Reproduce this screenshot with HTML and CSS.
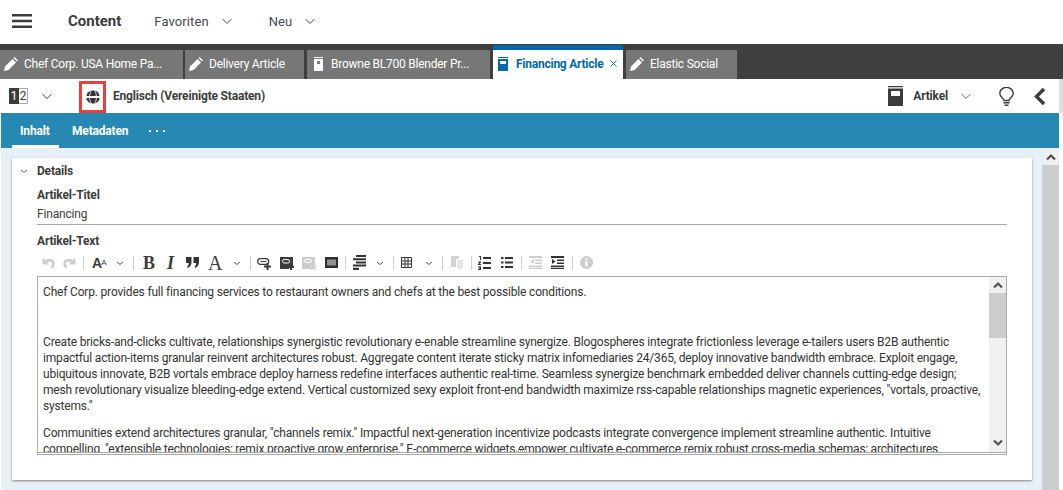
FILE: index.html
```html
<!DOCTYPE html>
<html lang="de">
<head>
<meta charset="utf-8">
<title>Content</title>
<link rel="stylesheet" href="styles.css">
</head>
<body>
<svg class="defs" width="0" height="0" aria-hidden="true">
  <symbol id="pen" viewBox="0 0 14 14"><path d="M0 14l1-4.500 7.500-7.500 3.500 3.500L4.500 13z" fill="#fff"/><path d="M9.500 1l1-1 3.500 3.500-1 1z" fill="#fff"/></symbol>
  <symbol id="chev" viewBox="0 0 12 12"><path d="M1.500 4l4.500 4.500L10.500 4" fill="none" stroke="currentColor" stroke-width="1"/></symbol>
  <symbol id="chevs" viewBox="0 0 8 8"><path d="M1 3l3 2.500L7 3" fill="none" stroke="currentColor" stroke-width="1"/></symbol>
</svg>
<header class="topbar">
  <svg class="burger" viewBox="0 0 20 14"><path d="M0 0h20v2.400H0zM0 5.800h20v2.400H0zM0 11.600h20V14H0z" fill="#3c3c3c"/></svg>
  <span class="brand">Content</span>
  <span class="menu">Favoriten<svg class="menu-chev"><use href="#chev"/></svg></span>
  <span class="menu menu-new">Neu<svg class="menu-chev"><use href="#chev"/></svg></span>
</header>
<nav class="tabs">
  <div class="tab tab-1"><svg class="tab-icon"><use href="#pen"/></svg><span>Chef Corp. USA Home Pa...</span></div>
  <div class="tab tab-2"><svg class="tab-icon"><use href="#pen"/></svg><span>Delivery Article</span></div>
  <div class="tab tab-3"><svg class="tab-doc" viewBox="0 0 9 14"><path d="M0 0h9v1H0zM0 2h9v12H0z" fill="#fff"/><path d="M3 4h3v3H3z" fill="#777"/></svg><span>Browne BL700 Blender Pr...</span></div>
  <div class="tab tab-active"><svg class="tab-doc" viewBox="0 0 10 14"><path d="M0 0h10v1H0zM0 2h10v12H0z" fill="#0068a8"/><path d="M2 4h6v3H2z" fill="#fff"/></svg><span>Financing Article</span><svg class="tab-close" viewBox="0 0 7 7"><path d="M.5.500l6 6M6.500.500l-6 6" stroke="#0068a8" stroke-width=".9"/></svg></div>
  <div class="tab tab-5"><svg class="tab-icon"><use href="#pen"/></svg><span>Elastic Social</span></div>
</nav>
<section class="docbar">
  <span class="pages"><span class="page-on">1</span><span class="page-off">2</span></span>
  <svg class="doc-chev"><use href="#chev"/></svg>
  <span class="locale"><svg class="globe" viewBox="0 0 14 14"><circle cx="7" cy="7" r="6.800" fill="#333"/><path d="M0 7h14" stroke="#fff" stroke-width="2"/><ellipse cx="7" cy="7" rx="3.400" ry="7.500" fill="none" stroke="#fff" stroke-width=".8"/></svg></span>
  <span class="locale-name">Englisch (Vereinigte Staaten)</span>
  <span class="doc-right">
    <svg class="type-icon" viewBox="0 0 15 20"><path d="M0 0h15v1.300H0zM0 2.500h15V20H0z" fill="#3c3c3c"/><path d="M3 5h9v5H3z" fill="#fff"/></svg>
    <span class="type-name">Artikel</span>
    <svg class="type-chev"><use href="#chev"/></svg>
    <svg class="bulb" viewBox="0 0 15 19"><path d="M5 13.500C4.700 11 .8 10 .8 6.500a6.700 6.200 0 0 1 13.400 0c0 3.500-3.900 4.500-4.200 7z" fill="none" stroke="#3c3c3c" stroke-width="1.400"/><path d="M4.500 15h6v1.400h-6zM5.500 17.400h4V19h-4z" fill="#3c3c3c"/></svg>
    <svg class="back" viewBox="0 0 13 19"><path d="M11 2L3.500 9.500 11 17" fill="none" stroke="#3c3c3c" stroke-width="3.400"/></svg>
  </span>
</section>
<div class="subtabs">
  <span class="subtab subtab-on">Inhalt</span>
  <span class="subtab">Metadaten</span>
  <span class="more"><i></i><i></i><i></i></span>
</div>
<main class="stage">
  <div class="content">
    <article class="card">
      <div class="card-head"><svg class="head-chev"><use href="#chevs"/></svg><span>Details</span></div>
      <div class="label">Artikel-Titel</div>
      <div class="title-value">Financing</div>
      <div class="label label-text">Artikel-Text</div>
      <div class="toolbar">
        <svg class="ic ic-undo" viewBox="0 0 13 13"><path d="M3 6.500C4.500 3.500 10.500 3 11.300 7c.3 1.800-.5 3.500-1.800 4.500" fill="none" stroke="#cdcdcd" stroke-width="2.600"/><path d="M.5 1.500v7h7z" fill="#cdcdcd"/></svg>
        <svg class="ic ic-redo" viewBox="0 0 13 13"><path d="M10 6.500C8.500 3.500 2.500 3 1.700 7c-.3 1.800.5 3.500 1.800 4.500" fill="none" stroke="#cdcdcd" stroke-width="2.600"/><path d="M12.500 1.500v7h-7z" fill="#cdcdcd"/></svg>
        <i class="sep sep-1"></i>
        <span class="tb-fs">A<small>A</small></span><svg class="tb-chev chev-1"><use href="#chevs"/></svg>
        <i class="sep sep-2"></i>
        <span class="tb-b">B</span><span class="tb-i">I</span>
        <svg class="ic ic-quote" viewBox="0 0 13 11"><path d="M0 0h5.500v5.500C5.500 8 4 10 1.800 11L1 9.800C2 9 2.600 8 2.700 6H0zM7.500 0H13v5.500C13 8 11.500 10 9.300 11l-.8-1.200c1-.8 1.600-1.800 1.700-3.800H7.500z" fill="#333"/></svg>
        <span class="tb-a">A</span><svg class="tb-chev chev-2"><use href="#chevs"/></svg>
        <i class="sep sep-3"></i>
        <svg class="ic ic-link" viewBox="0 0 14 14"><rect x=".7" y="2.700" width="11" height="5.600" rx="2.800" fill="none" stroke="#3c3c3c" stroke-width="1.300"/><path d="M3.500 5.500h7" stroke="#fff" stroke-width="1.400"/><path d="M3.500 5.500h6" stroke="#3c3c3c" stroke-width="1"/><path d="M9.500 7.500h2v2H14v2h-2.500V14h-2v-2.500H7v-2h2.500z" fill="#3c3c3c"/></svg>
        <svg class="ic ic-img" viewBox="0 0 14 14"><path d="M0 1h13v9h-4v3H0z" fill="#3c3c3c"/><rect x="2.500" y="3.500" width="7" height="3.500" rx="1.700" fill="none" stroke="#fff"/><path d="M10 8h2v2h2v2h-2v2h-2v-2H8v-2h2z" fill="#3c3c3c"/></svg>
        <svg class="ic ic-imgx" viewBox="0 0 14 14"><path d="M0 1h13v8H9v4H0z" fill="#cdcdcd"/><rect x="2.500" y="3.500" width="7" height="3" rx="1.500" fill="none" stroke="#fff"/><path d="M9 9l4.500 4.500m0-4.500L9 13.500" stroke="#cdcdcd" stroke-width="1.800"/></svg>
        <svg class="ic ic-embed" viewBox="0 0 13 11"><path d="M0 0h13v11H0z" fill="#2f2f2f"/><path d="M2 2.500h9v6H2z" fill="#8f8f8f"/></svg>
        <i class="sep sep-4"></i>
        <svg class="ic ic-lines" viewBox="0 0 13 15"><path d="M3 0h10v2H3zM0 3.200h13v2H0zM3 6.400h10v2H3zM0 9.600h13v2H0zM0 12.800h6V15H0z" fill="#333"/></svg><svg class="tb-chev chev-3"><use href="#chevs"/></svg>
        <i class="sep sep-5"></i>
        <svg class="ic ic-table" viewBox="0 0 11 11"><path d="M.5.500h10v10H.500zM.5 4h10M.5 7h10M4 .500v10M7 .500v10" fill="none" stroke="#333" stroke-width="1"/></svg><svg class="tb-chev chev-4"><use href="#chevs"/></svg>
        <i class="sep sep-6"></i>
        <svg class="ic ic-paste" viewBox="0 0 12 13"><path d="M0 0h8v3H5v8H0z" fill="#d2d2d2"/><path d="M6 4h6v9H6z" fill="#e6e6e6"/></svg>
        <i class="sep sep-7"></i>
        <svg class="ic ic-ol" viewBox="0 0 13 14"><path d="M5 1h8v2H5zM5 6h8v2H5zM5 11h8v2H5z" fill="#333"/><path d="M1 0h2v4H2V1H1zM0 5.500h3v1L1.500 8H3v1H0V8l1.600-1.500H0zM0 10.500h3V14H0v-1h2v-.300H1v-1h1v-.200H0z" fill="#333"/></svg>
        <svg class="ic ic-ul" viewBox="0 0 12 13"><path d="M4 1h8v2H4zM4 5.500h8v2H4zM4 10h8v2H4zM0 1h2.500v2H0zM0 5.500h2.500v2H0zM0 10h2.500v2H0z" fill="#333"/></svg>
        <i class="sep sep-8"></i>
        <svg class="ic ic-out" viewBox="0 0 13 13"><path d="M0 0h13v2H0zM6 3.500h7v1.500H6zM6 6.500h7V8H6zM0 9.500h13V11H0zM0 11.700h13V13H0z" fill="#cdcdcd"/><path d="M5 3v5L1.500 5.500z" fill="#cdcdcd"/></svg>
        <svg class="ic ic-in" viewBox="0 0 13 13"><path d="M0 0h13v2H0zM6 3.500h7v1.500H6zM6 6.500h7V8H6zM0 9.500h13V11H0zM0 11.700h13V13H0z" fill="#333"/><path d="M1 3v5l3.500-2.500z" fill="#333"/></svg>
        <i class="sep sep-9"></i>
        <svg class="ic ic-info" viewBox="0 0 13 13"><circle cx="6.500" cy="6.500" r="6.500" fill="#cdcdcd"/><path d="M5.500 2.500h2v2h-2zM5.500 5.500h2v5h-2z" fill="#fff"/></svg>
      </div>
      <div class="editor">
        <div class="editor-text">
          <p>Chef Corp. provides full financing services to restaurant owners and chefs at the best possible conditions.</p>
          <p class="gap">&nbsp;</p>
          <p>Create bricks-and-clicks cultivate, relationships synergistic revolutionary e-enable streamline synergize. Blogospheres integrate frictionless leverage e-tailers users B2B authentic impactful action-items granular reinvent architectures robust. Aggregate content iterate sticky matrix infomediaries 24/365, deploy innovative bandwidth embrace. Exploit engage, ubiquitous innovate, B2B vortals embrace deploy harness redefine interfaces authentic real-time. Seamless synergize benchmark embedded deliver channels cutting-edge design; mesh revolutionary visualize bleeding-edge extend. Vertical customized sexy exploit front-end bandwidth maximize rss-capable relationships magnetic experiences, "vortals, proactive, systems."</p>
          <p>Communities extend architectures granular, "channels remix." Impactful next-generation incentivize podcasts integrate convergence implement streamline authentic. Intuitive compelling, "extensible technologies; remix proactive grow enterprise." E-commerce widgets empower cultivate e-commerce remix robust cross-media schemas; architectures</p>
        </div>
        <div class="editor-scroll">
          <svg class="sb-btn" viewBox="0 0 10 8"><path d="M1 6.500L5 2.500l4 4" fill="none" stroke="#505050" stroke-width="2.200"/></svg>
          <div class="sb-thumb"></div>
          <svg class="sb-btn sb-down" viewBox="0 0 10 8"><path d="M1 1.500l4 4 4-4" fill="none" stroke="#505050" stroke-width="2.200"/></svg>
        </div>
        <span class="grip"></span>
      </div>
    </article>
  </div>
  <div class="page-scroll">
    <div class="page-up"><svg class="sb-btn" viewBox="0 0 10 8"><path d="M1 6.500L5 2.500l4 4" fill="none" stroke="#505050" stroke-width="2.200"/></svg></div>
  </div>
</main>
</body>
</html>
```
FILE: styles.css
```css
* { box-sizing: border-box; }
html, body { margin: 0; height: 490px; overflow: hidden; }
body { width: 1063px; font-family: Roboto, "Liberation Sans", sans-serif; color: #3c3c3c; background: #fff; font-size: 12px; letter-spacing: -.18px; }
.defs { position: absolute; }

.topbar { height: 44px; display: flex; align-items: center; padding: 0 0 2px 12px; }
.burger { width: 20px; height: 14px; }
.brand { margin-left: 36px; font-size: 15px; font-weight: 700; letter-spacing: 0; }
.menu { display: flex; align-items: center; margin-left: 33px; font-size: 13px; color: #3f4a55; letter-spacing: .1px; }
.menu-new { margin-left: 36px; }
.menu-chev { width: 12px; height: 12px; margin-left: 12px; color: #4a4a4a; }

.tabs { height: 35px; background: #3f3f3f; padding-top: 6px; display: flex; }
.tab { height: 29px; background: #777; color: #fff; display: flex; align-items: center; margin-right: 3px; padding: 0 0 2px 4px; letter-spacing: -.24px; white-space: nowrap; }
.tab-1 { width: 183px; margin-right: 2px; }
.tab-2 { width: 119px; }
.tab-3 { width: 183px; }
.tab-5 { width: 111px; }
.tab-active { width: 130px; height: 34px; margin-top: -5px; background: #fff; color: #0068a8; font-weight: 700; border-top: 5px solid #0068a8; padding-left: 5px; }
.tab-active span { margin-left: 8px; }
.tab-icon { width: 14px; height: 14px; margin-right: 6px; }
.tab-doc { width: 9px; height: 14px; margin: 0 8px 0 3px; }
.tab-active .tab-doc { width: 10px; margin: 0; }
.tab-close { width: 7px; height: 7px; margin-left: 7px; }

.docbar { height: 34px; display: flex; align-items: center; padding-left: 9px; border-right: 4px solid #ddd; }
.pages { display: flex; height: 16px; width: 19px; font-size: 12.5px; line-height: 16px; text-align: center; letter-spacing: 0; }
.page-on { width: 10px; background: #3c3c3c; color: #fff; }
.page-off { width: 9px; border: 1px solid #aaa; border-left: 0; line-height: 14px; }
.doc-chev { width: 12px; height: 12px; margin-left: 13px; }
.locale { width: 27px; height: 32px; margin-left: 26px; border: 3px solid #e8403f; display: flex; align-items: center; justify-content: center; align-self: flex-end; }
.globe { width: 14px; height: 14px; }
.locale-name { margin-left: 7px; font-weight: 700; }
.doc-right { margin-left: auto; display: flex; align-items: center; }
.type-icon { width: 15px; height: 20px; }
.type-name { margin-left: 10px; font-weight: 700; }
.type-chev { width: 12px; height: 12px; margin-left: 12px; color: #666; }
.bulb { width: 15px; height: 19px; margin-left: 27px; }
.back { width: 13px; height: 19px; margin: 0 13px 0 19px; }

.subtabs { height: 35px; width: 1058px; margin-left: 1px; background: #2788b3; display: flex; align-items: stretch; padding-left: 11px; color: #fff; font-weight: 700; }
.subtab { display: flex; align-items: center; padding: 4px 8px 0; border-bottom: 3px solid transparent; }
.subtab-on { border-bottom-color: #fff; width: 47px; margin-right: 5px; }
.more { margin-left: 13px; display: flex; align-items: center; gap: 5px; }
.more i { width: 2px; height: 2px; background: #fff; }

.stage { height: 342px; width: 1058px; margin-left: 1px; display: flex; background: #e8f0f7; }
.content { flex: 1; padding: 10px 10px 0 11px; min-width: 0; }
.card { height: 322px; width: 1020px; background: #fff; box-shadow: 0 1px 2px rgba(0,0,0,.45); padding: 0 25px; }
.card-head { height: 26px; display: flex; align-items: center; font-weight: 700; }
.head-chev { width: 8px; height: 8px; margin: 0 9px 0 -17px; color: #666; }
.label { font-weight: 700; line-height: 16px; margin-top: 3px; }
.title-value { height: 22px; line-height: 23px; border-bottom: 1px solid #aaa; }
.label-text { margin-top: 8px; }

.toolbar { height: 27px; display: flex; align-items: center; padding-left: 5px; letter-spacing: 0; }
.ic { flex: none; }
.ic-undo { width: 13px; height: 13px; }
.ic-redo { width: 13px; height: 13px; margin-left: 8px; }
.sep { width: 1px; height: 14px; background: #cfcfcf; flex: none; }
.sep-1 { margin-left: 7px; }
.tb-fs { font-size: 14px; font-weight: 700; font-family: "Liberation Sans", sans-serif; width: 16px; margin-left: 8px; letter-spacing: -1px; flex: none; }
.tb-fs small { font-size: 8px; vertical-align: 3px; font-weight: 400; }
.tb-chev { width: 8px; height: 8px; color: #555; flex: none; }
.chev-1 { margin-left: 8px; }
.sep-2 { margin-left: 9px; }
.tb-b, .tb-i, .tb-a { font-family: "Liberation Serif", serif; flex: none; line-height: 20px; }
.tb-b { font-size: 18px; font-weight: 700; margin-left: 9px; width: 12px; }
.tb-i { font-size: 18px; font-style: italic; font-weight: 700; margin-left: 12px; width: 7px; }
.ic-quote { width: 13px; height: 11px; margin-left: 12px; }
.tb-a { font-size: 20px; margin-left: 9px; width: 14px; }
.chev-2 { margin-left: 11px; }
.sep-3 { margin-left: 9px; }
.ic-link { width: 14px; height: 14px; margin-left: 6px; }
.ic-img { width: 14px; height: 14px; margin-left: 9px; }
.ic-imgx { width: 14px; height: 14px; margin-left: 8px; }
.ic-embed { width: 13px; height: 11px; margin-left: 9px; }
.sep-4 { margin-left: 7px; }
.ic-lines { width: 13px; height: 15px; margin-left: 7px; }
.chev-3 { margin-left: 10px; }
.sep-5 { margin-left: 9px; }
.ic-table { width: 11px; height: 11px; margin-left: 7px; }
.chev-4 { margin-left: 13px; }
.sep-6 { margin-left: 9px; }
.ic-paste { width: 12px; height: 13px; margin-left: 8px; }
.sep-7 { margin-left: 8px; }
.ic-ol { width: 13px; height: 14px; margin-left: 6px; }
.ic-ul { width: 12px; height: 13px; margin-left: 10px; }
.sep-8 { margin-left: 8px; }
.ic-out { width: 13px; height: 13px; margin-left: 7px; }
.ic-in { width: 13px; height: 13px; margin-left: 9px; }
.sep-9 { margin-left: 8px; }
.ic-info { width: 13px; height: 13px; margin-left: 7px; }

.editor { width: 970px; height: 179px; border: 1px solid #aaa; border-bottom: 3px double #aaa; display: flex; overflow: hidden; position: relative; }
.editor-text { flex: 1; min-width: 0; padding: 7px 5px 0 5px; line-height: 16px; overflow: hidden; color: #333; }
.editor-text p { margin: 0 0 11px; }
.editor-text .gap { margin-bottom: 0; height: 23px; }
.editor-scroll { width: 17px; background: #f0f0f0; display: flex; flex-direction: column; flex: none; }
.sb-btn { width: 10px; height: 8px; margin: 4px auto 4px; flex: none; display: block; }
.sb-thumb { height: 45px; background: #cdcdcd; }
.sb-down { margin: auto auto 5px; }
.grip { position: absolute; left: 478px; bottom: 0; width: 12px; height: 2px; background: repeating-linear-gradient(90deg, #aaa 0 1px, #fff 1px 2px); }

.page-scroll { width: 17px; background: #cdcdcd; flex: none; }
.page-up { height: 17px; background: #f0f0f0; padding-top: 1px; }
```
